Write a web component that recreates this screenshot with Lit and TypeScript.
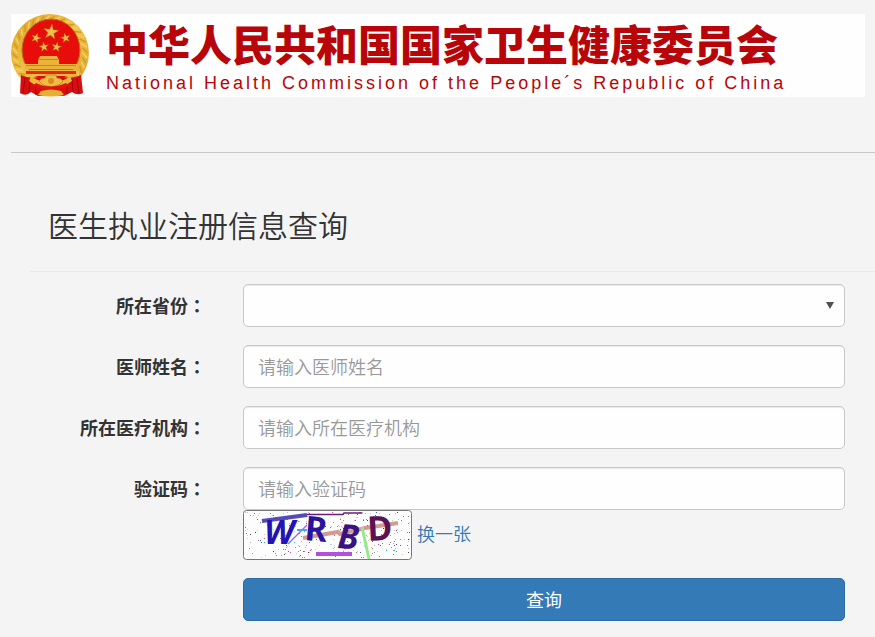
import { LitElement, html, svg, css } from "lit";
import { customElement, property } from "lit/decorators.js";

const starPoints = (cx: number, cy: number, r: number, turn = 0): string =>
  Array.from({ length: 10 }, (_, i) => {
    const a = ((i * 36 - 90 + turn) * Math.PI) / 180;
    const d = i % 2 ? r * 0.4 : r;
    return `${(cx + Math.cos(a) * d).toFixed(2)},${(cy + Math.sin(a) * d).toFixed(2)}`;
  }).join(" ");

@customElement("national-emblem")
export class NationalEmblem extends LitElement {
  static styles = css`
    :host { display: block; flex: none; }
    .emblem { display: block; width: 80px; height: 83px; }
  `;

  render() {
    const leaves = Array.from({ length: 44 }, (_, i) => {
      const a = ((i * 360) / 44) * (Math.PI / 180);
      const b = a + 0.12;
      return svg`<path d="M${39 + Math.cos(a) * 33} ${39 + Math.sin(a) * 33}L${39 + Math.cos(b) * 37} ${39 + Math.sin(b) * 37}"
        stroke=${i % 2 ? "#d39a28" : "#f3d065"} stroke-width="1.5" stroke-linecap="round"/>`;
    });
    return html`
      <svg class="emblem" viewBox="0 0 80 83" role="img" aria-label="国徽">
        <defs>
          <linearGradient id="gold" x1="0" y1="0" x2="1" y2="1">
            <stop offset="0" stop-color="#dca425"/><stop offset=".5" stop-color="#f1c448"/><stop offset="1" stop-color="#dba22a"/>
          </linearGradient>
        </defs>
        <circle cx="39" cy="39" r="39" fill="url(#gold)"/>
        ${leaves}
        <ellipse cx="40" cy="36" rx="29" ry="31" fill="#e60d0b" stroke="#b9780f" stroke-width="1"/>
        <g fill="#efbd4c" stroke="#b96a16" stroke-width=".4">
          <polygon points=${starPoints(40, 18, 8, 8)}/>
          <polygon points=${starPoints(25, 24, 5, 18)}/>
          <polygon points=${starPoints(33, 33, 5, -8)}/>
          <polygon points=${starPoints(45.5, 33, 5, 12)}/>
          <polygon points=${starPoints(54.5, 24, 5, -12)}/>
        </g>
        <path d="M29 42H46L48 46V50H66V55H14V50H27V46Z" fill="#edb23c"/>
        <path d="M28 45.500H47M15 51.500H65" stroke="#c97517" stroke-width=".8"/>
        <path d="M12 55.500H68L65 62H15Z" fill="#edba3f"/>
        <path d="M15 57H65V60H15Z" fill="#e32a12"/>
        <path d="M10 61Q21 66 32 62L40 66L48 62Q60 66 70 61L72 79Q66 82 61 78L53 82H27L20 78Q15 83 9 79Z" fill="#d90d10"/>
        <path d="M14 64L12 79M19 65L18 78M24 66L25 81M56 66L56 80M61 65L62 78M66 64L68 79" stroke="#9d0709" stroke-width="1" fill="none"/>
        <path d="M20 62Q30 70 40 66Q50 70 59 62L61 67Q50 75 40 72Q28 75 18 67Z" fill="#edb638"/>
        <path d="M28 67Q30 64 34 64L35 61H45L46 64Q50 64 52 67L48 71L40 73L32 71Z" fill="#efbd45" stroke="#b9731b" stroke-width=".7"/>
        <circle cx="40" cy="67" r="3" fill="#d98f1d"/>
        <path d="M25 69Q39 76 55 69L58 72Q40 80 22 72Z" fill="#df140e"/>
        <path d="M30 77Q40 74 50 77L53 81Q40 84 27 81Z" fill="#e9ae34"/>
      </svg>`;
  }
}

@customElement("captcha-image")
export class CaptchaImage extends LitElement {
  @property() code = "WRBD";

  static styles = css`
    :host { display: block; flex: none; }
    .captcha { display: block; width: 169px; height: 50px; overflow: visible; }
    .char { font-family: "Noto Sans", sans-serif; font-weight: 700; font-size: 34px; }
    .slant { font-style: italic; }
  `;

  private specks() {
    const colors = ["#d23a9b", "#37b24d", "#3b3bd6", "#1fb5b0", "#d2691e", "#777", "#8a2be2", "#333"];
    let seed = 71;
    const next = () => (seed = (seed * 16807) % 2147483647) / 2147483647;
    return Array.from({ length: 340 }, () => {
      const x = 2 + Math.floor(next() * 165);
      const y = 2 + Math.floor(next() * 46);
      return svg`<rect x=${x} y=${y} width="1" height="1" fill=${colors[Math.floor(next() * 8)]} opacity=${next() > 0.5 ? 0.9 : 0.4}/>`;
    });
  }

  render() {
    const [a, b, c, d] = this.code;
    return html`
      <svg class="captcha" viewBox="0 0 169 50" role="img" aria-label="验证码图片">
        <rect x=".5" y=".5" width="168" height="49" rx="3" fill="#fdfdfd" stroke="#777"/>
        ${this.specks()}
        <path d="M19 11L64 5" stroke="#554bb8" stroke-width="4"/>
        <path d="M64 4.500H100L101 3H119" stroke="#6e1b7c" stroke-width="1.500" fill="none"/>
        <path d="M60 28L95 22L97 24L122 18L155 13" stroke="#d29a92" stroke-width="4" fill="none"/>
        <path d="M45 34L64 15" stroke="#9a6cf0" stroke-width="1.500"/>
        <path d="M54 20H64" stroke="#4aa6f0" stroke-width="2"/>
        <text class="char slant" x="21" y="34" fill="#2313b4">${a}</text>
        <text class="char" x="61" y="30" fill="#2b149c" transform="rotate(5 61 30)">${b}</text>
        <text class="char slant" x="94" y="38" fill="#3b127f" transform="rotate(4 94 38)">${c}</text>
        <text class="char" x="125" y="31" fill="#5a1255" transform="rotate(-3 125 31)">${d}</text>
        <path d="M119 17L126 49" stroke="#94ea88" stroke-width="3"/>
        <path d="M73 44H109" stroke="#b150dc" stroke-width="4"/>
      </svg>`;
  }
}

@customElement("app-root")
export class AppRoot extends LitElement {
  static styles = css`
    :host {
      display: block;
      min-height: 100vh;
      box-sizing: border-box;
      padding: 14px 0 15px 11px;
      background: #f4f4f4;
      color: #333;
      font-family: "Noto Sans CJK SC", sans-serif;
      font-size: 18px;
      line-height: 25px;
    }
    * { box-sizing: border-box; }
    .banner {
      display: flex;
      gap: 15px;
      min-height: 83px;
      margin-right: 10px;
      background: #fefefe;
      color: #b80509;
    }
    .names { padding-top: 4px; white-space: nowrap; }
    .name { margin: 0; font-size: 42px; font-weight: 900; line-height: 50px; }
    .english {
      margin: 0;
      padding-top: 3px;
      font-family: "Liberation Sans", sans-serif;
      font-size: 18px;
      line-height: 24px;
      letter-spacing: 3px;
    }
    .query { margin-top: 55px; padding: 49px 0 0 19px; border-top: 1px solid #c8c8c8; }
    .title {
      margin: 0;
      padding: 0 0 24px 18px;
      border-bottom: 1px solid #e9e9e9;
      font-size: 30px;
      font-weight: 350;
      line-height: 45px;
    }
    .form {
      display: grid;
      grid-template-columns: 176px minmax(0, 1fr);
      column-gap: 37px;
      row-gap: 18px;
      padding: 12px 30px 0 0;
    }
    .label { padding-top: 9px; text-align: right; font-weight: 700; }
    .colon { font-family: "Noto Sans CJK TC", sans-serif; }
    .field { position: relative; }
    .control {
      display: block;
      width: 100%;
      height: 43px;
      margin: 0;
      padding: 5px 14px 7px;
      border: 1px solid #c8c8c8;
      border-radius: 5px;
      background: #fefefe;
      box-shadow: inset 0 1px 1px rgba(0, 0, 0, 0.08);
      color: #555;
      font: inherit;
      font-weight: 350;
      appearance: none;
    }
    .control::placeholder { color: #999; opacity: 1; }
    .arrow {
      position: absolute;
      top: 18px;
      right: 11px;
      width: 8px;
      height: 7px;
      pointer-events: none;
    }
    .check { display: flex; align-items: center; gap: 5px; }
    .refresh { padding-bottom: 4px; color: #337ab7; font-weight: 350; text-decoration: none; }
    .submit {
      grid-column: 2;
      height: 43px;
      padding: 0;
      border: 1px solid #2e6da4;
      border-radius: 5px;
      background: #337ab7;
      color: #fff;
      font: inherit;
    }
  `;

  private label(id: string, text: string) {
    return html`<label class="label" for=${id}>${text}<span class="colon" lang="zh-TW">：</span></label>`;
  }

  render() {
    return html`
      <header class="banner">
        <national-emblem></national-emblem>
        <div class="names">
          <p class="name">中华人民共和国国家卫生健康委员会</p>
          <p class="english" lang="en">National Health Commission of the People´s Republic of China</p>
        </div>
      </header>
      <main class="query">
        <h1 class="title">医生执业注册信息查询</h1>
        <form class="form" @submit=${(e: Event) => e.preventDefault()}>
          ${this.label("province", "所在省份")}
          <div class="field">
            <select class="control" id="province"><option value=""></option></select>
            <svg class="arrow" viewBox="0 0 8 7" aria-hidden="true"><path d="M0 0H8L4 7Z" fill="#505050"/></svg>
          </div>
          ${this.label("doctor", "医师姓名")}
          <div class="field"><input class="control" id="doctor" type="text" placeholder="请输入医师姓名"></div>
          ${this.label("hospital", "所在医疗机构")}
          <div class="field"><input class="control" id="hospital" type="text" placeholder="请输入所在医疗机构"></div>
          ${this.label("code", "验证码")}
          <div class="field">
            <input class="control" id="code" type="text" autocomplete="off" placeholder="请输入验证码">
            <div class="check">
              <captcha-image></captcha-image>
              <a class="refresh" href="#">换一张</a>
            </div>
          </div>
          <button class="submit" type="submit">查询</button>
        </form>
      </main>`;
  }
}
